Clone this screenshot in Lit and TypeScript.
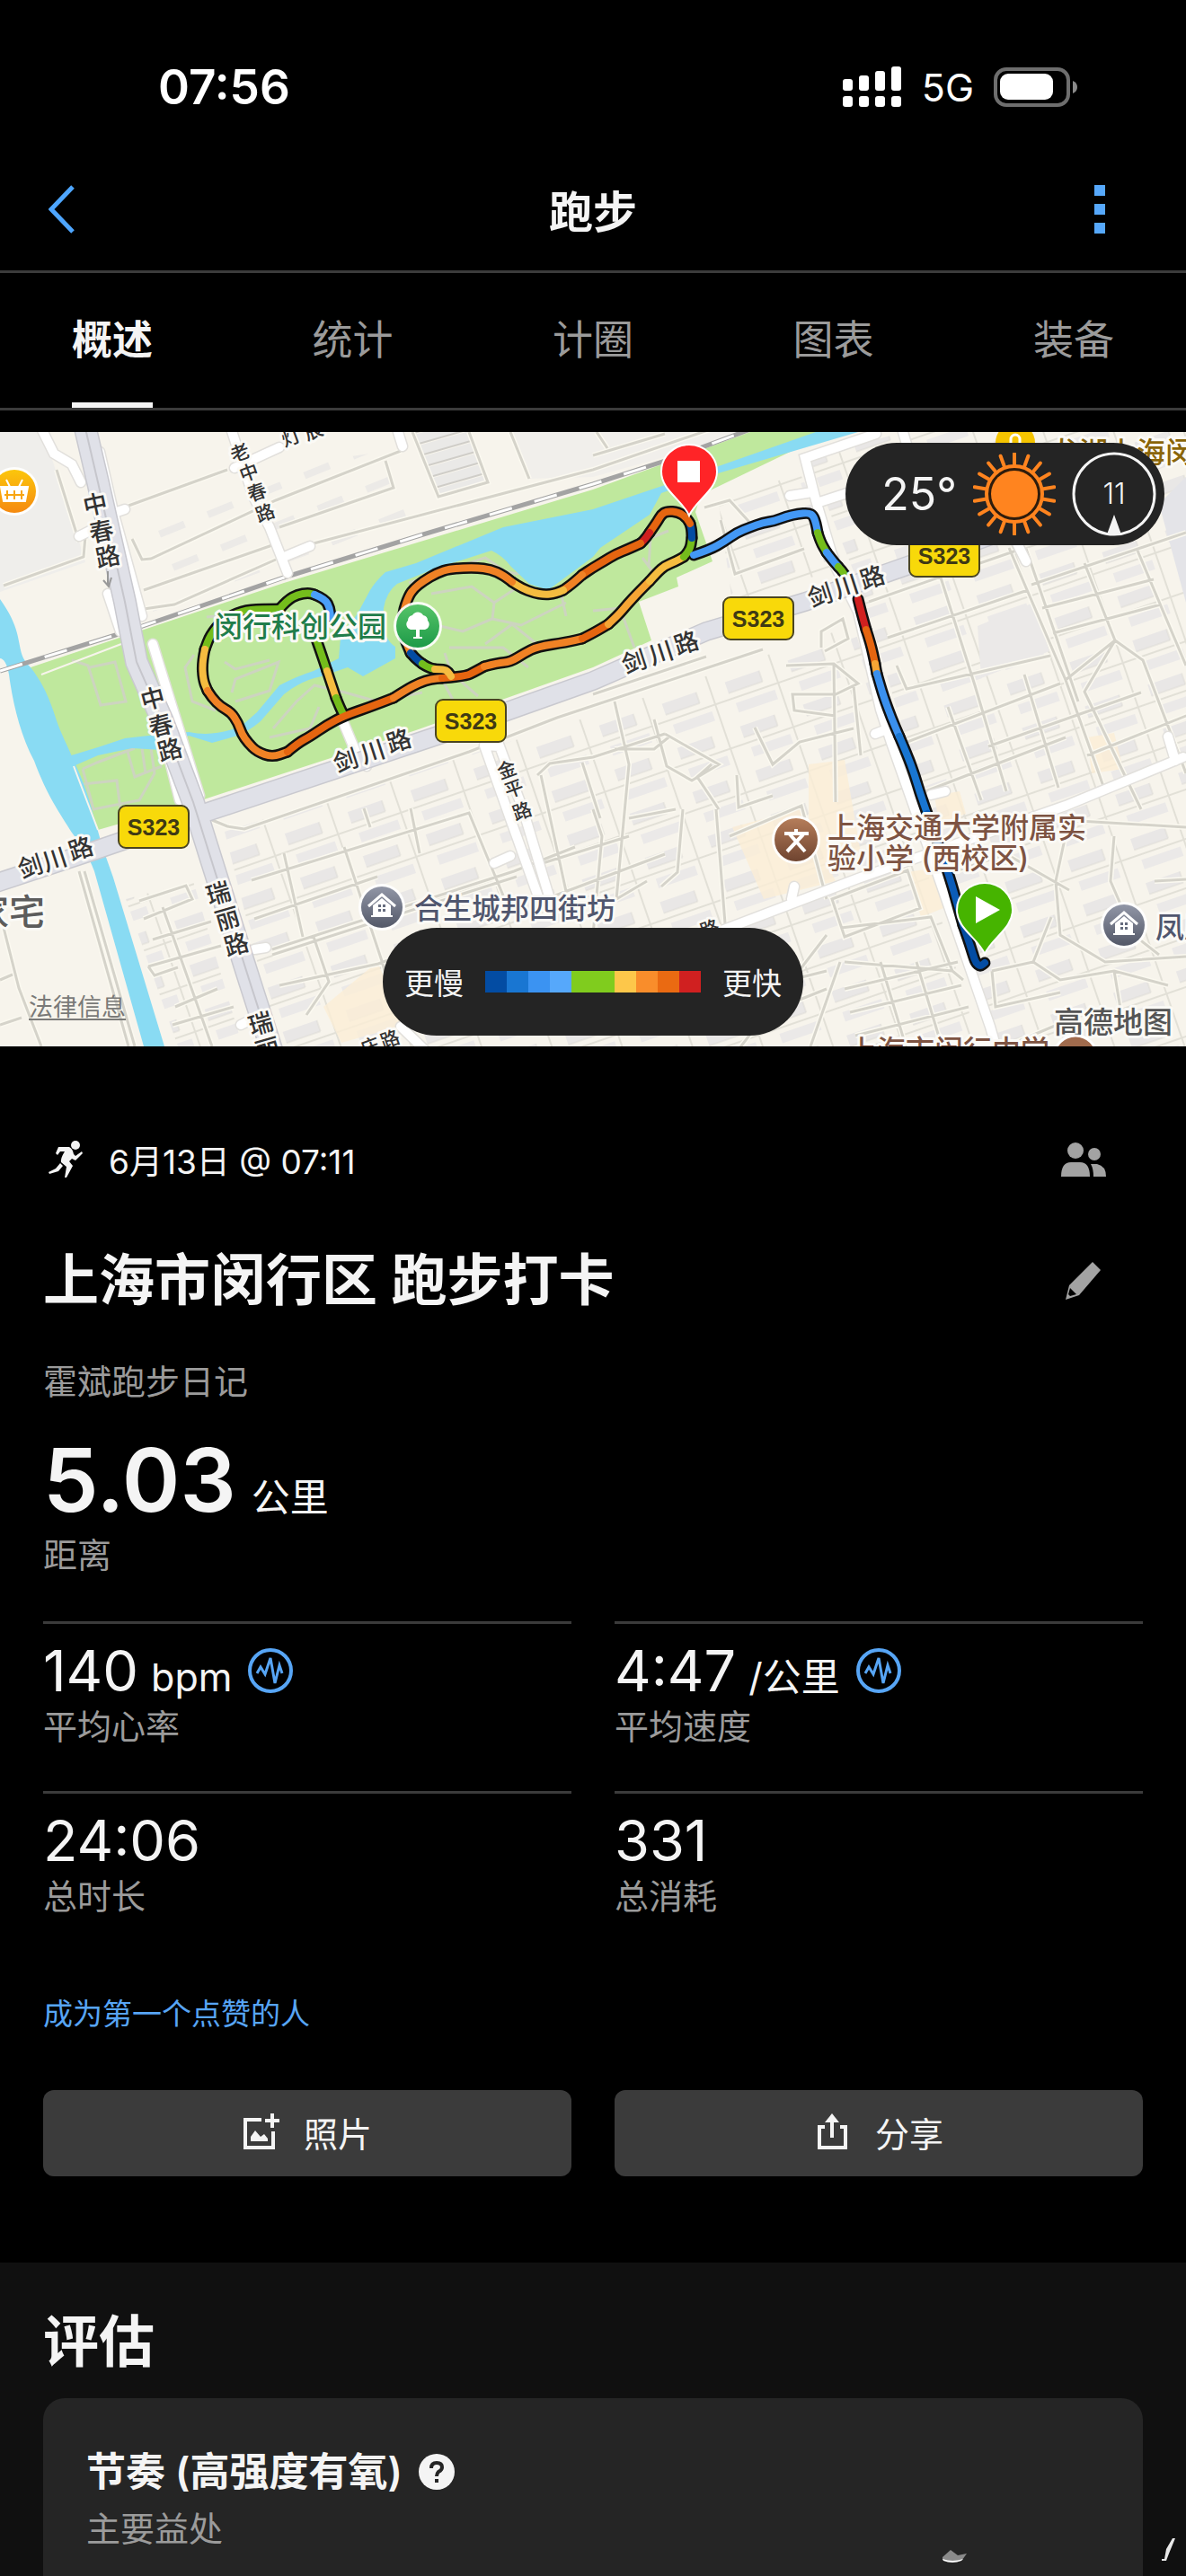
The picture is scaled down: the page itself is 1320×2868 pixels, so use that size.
import { LitElement, css, html, svg } from "lit";
import { customElement, property, state } from "lit/decorators.js";
import { classMap } from "lit/directives/class-map.js";

type Point = [number, number];

interface RouteSegment {
  color: string;
  points: Point[];
}

interface RoadLabel {
  text: string;
  angle: number;
  size: number;
  at: Point[];
}

// slow -> fast
const PACE_COLORS = [
  "#034ca3",
  "#1976d2",
  "#3b93f2",
  "#56a8fb",
  "#80cc1e",
  "#80cc1e",
  "#fdc74a",
  "#f98d2b",
  "#ea6a12",
  "#d02020",
];

const ROUTE: RouteSegment[] = [
  { color: "#74bd1c", points: [[311, 197], [320, 187], [331, 181], [343, 179], [350, 181]] },
  { color: "#4a9ff8", points: [[350, 181], [362, 186], [367, 196], [368, 206]] },
  { color: "#74bd1c", points: [[350, 225], [356, 242], [364, 266]] },
  { color: "#f5bc40", points: [[364, 266], [369, 281], [374, 296]] },
  { color: "#74bd1c", points: [[374, 296], [378, 306], [383, 316]] },
  { color: "#74bd1c", points: [[311, 197], [290, 197], [269, 199], [248, 209], [234, 226], [228, 242]] },
  { color: "#f5bc40", points: [[228, 242], [225, 256], [226, 276], [231, 288]] },
  { color: "#f08225", points: [[231, 288], [236, 296], [246, 306], [257, 312], [265, 324], [269, 336], [276, 346], [286, 356], [303, 362], [320, 356]] },
  { color: "#e56510", points: [[320, 356], [332, 346], [345, 339], [364, 326], [383, 316], [412, 306], [438, 296]] },
  { color: "#f08225", points: [[438, 296], [452, 287], [467, 279], [480, 275], [492, 274]] },
  { color: "#e56510", points: [[492, 274], [518, 272], [528, 267], [539, 261]] },
  { color: "#f08225", points: [[539, 261], [554, 257], [568, 256], [584, 246], [598, 239], [631, 234], [648, 230]] },
  { color: "#e56510", points: [[648, 230], [660, 224], [677, 214]] },
  { color: "#f5a535", points: [[677, 214], [688, 204], [698, 192], [711, 178], [723, 166]] },
  { color: "#f5bc40", points: [[723, 166], [732, 156], [740, 149], [752, 144], [761, 139]] },
  { color: "#74bd1c", points: [[761, 139], [768, 132], [770, 118]] },
  { color: "#034ca3", points: [[770, 118], [770, 110], [768, 102]] },
  { color: "#e56510", points: [[768, 102], [765, 96], [755, 89], [742, 88], [736, 92], [732, 99], [723, 112]] },
  { color: "#d02020", points: [[723, 112], [719, 118], [713, 124]] },
  { color: "#e56510", points: [[713, 124], [700, 130], [685, 136], [672, 144], [660, 151], [648, 159]] },
  { color: "#f08225", points: [[648, 159], [638, 168], [627, 176]] },
  { color: "#f5bc40", points: [[627, 176], [618, 180], [606, 181], [594, 179], [581, 174], [570, 167]] },
  { color: "#f08225", points: [[570, 167], [560, 159], [546, 153], [530, 151], [501, 152], [486, 157], [471, 166], [461, 174], [455, 182], [448, 202], [448, 225], [457, 246]] },
  { color: "#034ca3", points: [[457, 246], [462, 252], [470, 258]] },
  { color: "#74bd1c", points: [[470, 258], [476, 262], [484, 264]] },
  { color: "#f5bc40", points: [[484, 264], [494, 264], [499, 267], [502, 272]] },
  { color: "#4398f5", points: [[772, 137], [790, 131], [806, 122], [820, 112], [835, 106], [849, 101], [862, 99], [875, 94], [888, 91], [900, 90], [905, 93], [908, 101], [910, 112]] },
  { color: "#74bd1c", points: [[910, 112], [913, 122], [920, 134]] },
  { color: "#4398f5", points: [[920, 134], [926, 142], [933, 150]] },
  { color: "#74bd1c", points: [[933, 150], [937, 154], [942, 162]] },
  { color: "#d02020", points: [[955, 186], [959, 202], [964, 220]] },
  { color: "#e56510", points: [[964, 220], [969, 235], [974, 258]] },
  { color: "#f5a535", points: [[974, 258], [975, 264], [976, 269]] },
  { color: "#3a90ee", points: [[976, 269], [980, 283], [984, 296], [992, 318], [1001, 339]] },
  { color: "#1976d2", points: [[1001, 339], [1010, 360], [1018, 382], [1024, 402], [1032, 425]] },
  { color: "#0b5cb8", points: [[1032, 425], [1045, 460], [1058, 499], [1065, 524], [1072, 549]] },
  { color: "#034ca3", points: [[1072, 549], [1078, 566], [1083, 582], [1086, 591], [1091, 595], [1096, 591]] },
];

const ROAD_LABELS: RoadLabel[] = [
  { text: "中春路", angle: -12, size: 27, at: [[106, 81], [113, 111], [120, 139]] },
  { text: "中春路", angle: -15, size: 27, at: [[170, 297], [179, 327], [189, 354]] },
  { text: "瑞丽路", angle: -16, size: 27, at: [[243, 514], [253, 542], [263, 571]] },
  { text: "瑞丽", angle: -16, size: 27, at: [[290, 659], [298, 687]] },
  { text: "老中春路", angle: -20, size: 21, at: [[267, 23], [277, 45], [286, 67], [295, 90]] },
  { text: "金平路", angle: -20, size: 21, at: [[564, 376], [572, 397], [581, 422]] },
  { text: "剑川路", angle: -18, size: 27, at: [[34, 484], [61, 476], [90, 464]] },
  { text: "剑川路", angle: -18, size: 27, at: [[385, 366], [415, 356], [444, 344]] },
  { text: "剑川路", angle: -18, size: 27, at: [[706, 256], [736, 246], [764, 235]] },
  { text: "剑川路", angle: -18, size: 27, at: [[913, 182], [942, 172], [971, 162]] },
  { text: "灯辰", angle: -20, size: 21, at: [[324, 6], [349, -1]] },
  { text: "庄路", angle: -20, size: 21, at: [[412, 684], [434, 676]] },
  { text: "路", angle: -20, size: 21, at: [[790, 553]] },
];

const SHIELDS: Point[] = [
  [1011, 113],
  [804, 183],
  [484, 297],
  [131, 415],
];

const LANES = `
  M143 82L253 42 M147 119L158 142L168 141L307 76L446 21 M160 176L303 126
  M160 197L194 192L307 142 M349 124L660 42L840 -20 M311 106L438 62L429 32
  M459 0L488 72L543 56L522 0 M568 0L589 52 M4 171L93 139L95 116 M63 42L88 122
  M660 26L740 2 M664 0L676 18 M88 489L143 684 M94 489L150 684
  M0 536L21 619L46 684 M0 610L14 604 M0 660L24 652 M181 529L236 684
  M155 522L207 505L214 520L160 542 M170 565L235 545 M165 595L246 572
  M165 595L172 605L198 596 M195 640L242 620 M192 660L260 640
  M236 432L253 439L272 442L522 356L620 318L849 242 M660 292L786 250
  M280 499L522 424L560 516 M283 542L420 495 M303 576L572 489L640 462
  M303 582L575 495 M316 469L337 562 M383 462L425 589L440 640
  M457 419L467 469 M405 419L412 440 M311 616L421 592L520 556
  M349 562L366 612L341 649 M598 382L612 369L660 362L740 336
  M602 382L631 516 M604 480L700 450 M618 516L740 470 M648 368L668 430
  M684 300L700 370L686 520L720 500 M684 353L728 353L744 340
  M740 336L800 370L770 388L742 372L728 320 M792 370L776 384L800 420
  M875 260L928 258L955 280L930 292L882 292L884 310L930 316
  M914 240L914 222L938 208L944 230L918 244 M928 258L930 412 M950 282L958 360
  M840 329L860 370L890 345L950 330 M820 382L822 418L860 405
  M797 420L808 560 M812 450L892 416L920 520 M700 430L752 420
  M760 420L754 490L736 506 M660 420L670 450L660 560
  M802 98L818 158L895 130 M784 84L812 76L832 98L840 108L880 96
  M967 189L1131 132 M988 229L1144 176 M998 260L1009 286L1169 249
  M1047 162L1085 282 M1123 129L1186 276L1230 400 M1142 130L1200 300
  M1207 146L1241 232L1207 289L1270 420 M1266 132L1320 260
  M1148 170L1320 112 M1160 196L1284 164 M1172 224L1292 192
  M1186 276L1241 232L1272 254L1320 380 M1100 350L1270 290 M1085 282L1120 400
  M1010 345L1180 280 M1030 400L1186 340 M1055 306L1092 410 M1140 270L1178 396
  M1210 360L1330 312 M1150 430L1320 440 M1190 430L1175 500L1180 560L1230 590L1320 584
  M1240 450L1236 500L1262 560L1290 582 M1060 490L1120 470L1190 510
  M1104 600L1150 590L1170 540 M1150 590L1180 610L1240 600L1300 616
  M1104 600L1108 640L1180 624 M1240 600L1250 660 M1285 500L1320 498
  M1120 684L1200 650 M926 520L1010 488L1024 530L940 562Z
  M936 552L1036 540L1060 600 M820 690L920 560 M940 590L1060 600L1072 610
  M900 690L935 590 M980 590L1010 690 M940 620L1066 590 M946 646L1070 616
  M952 672L1078 640 M1020 590L1050 690 M880 610L920 600 M870 640L920 620
`;

const PARK_PATHS = `
  M80 254L98 260L112 304L140 300L128 256L100 262 M92 375L108 368L150 352
  M92 375L104 420L155 410L172 380L168 352 M92 392L130 388L134 420
  M142 356L150 384L180 372 M158 352L162 380 M230 206L250 204 M250 256L262 264L300 254
  M216 248L206 262L214 300L240 310 M258 290L262 275L310 256L300 288L262 300
  M304 330L330 300L350 282L384 290L420 300L470 290 M300 340L345 330L355 306
  M455 168L540 140L562 155L575 158L612 144L660 130 M480 180L525 172L550 190L548 208L515 222L490 216
  M550 190L580 170L625 182L630 205 M548 208L580 215L630 190 M540 236L570 214L600 238
  M500 240L560 240L588 262 M485 262L505 300 M495 246L502 268L532 294
  M660 199L690 196L706 240 M715 140L730 160 M722 150L724 118L744 110
`;

// midpoint smoothing keeps both ends in place so segments join up
const smooth = (points: Point[]) => {
  const [first, ...rest] = points;
  let d = `M${first[0]} ${first[1]}`;
  for (let i = 0; i < rest.length - 1; i++) {
    const [x, y] = rest[i];
    const [nx, ny] = rest[i + 1];
    d += `Q${x} ${y} ${(x + nx) / 2} ${(y + ny) / 2}`;
  }
  const last = rest[rest.length - 1];
  return `${d}L${last[0]} ${last[1]}`;
};

const houseIcon = (x: number, y: number) => svg`
  <g transform="translate(${x} ${y})">
    <circle r="26" fill="#fff" opacity="0.9" />
    <circle r="23" fill="url(#slate)" />
    <path d="M-15 -1L0 -14L15 -1" fill="none" stroke="#fff" stroke-width="3" />
    <path d="M-10 -2L0 -10L10 -2V9H12V11H-12V9H-10Z" fill="#fff" />
    <path d="M-4 -3H-1V0H-4ZM1 -3H4V0H1ZM-4 2H-1V5H-4ZM1 2H4V5H1Z" fill="#666c7e" />
  </g>
`;

const mapPin = (x: number, y: number, color: string) => svg`
  <path
    transform="translate(${x} ${y})"
    d="M0 0C-8 -18 -31 -28 -31 -49A31 30 0 0 1 31 -49C31 -28 8 -18 0 0Z"
    fill=${color}
    stroke="#fff"
    stroke-width="2"
  />
`;

@customElement("run-map")
export class RunMap extends LitElement {
  static styles = css`
    :host {
      display: block;
      position: relative;
      height: 684px;
      overflow: hidden;
      font-family: Inter, "Noto Sans CJK SC", sans-serif;
    }
    .canvas {
      display: block;
      width: 100%;
      height: 100%;
    }
    .halo {
      paint-order: stroke;
      stroke: #fbfaf6;
      stroke-width: 6px;
      stroke-linejoin: round;
    }
    .road {
      fill: #333;
      text-anchor: middle;
      dominant-baseline: central;
      font-weight: 500;
    }
    .place {
      font-size: 32px;
      font-weight: 500;
    }
    .park {
      fill: #1f7d4a;
    }
    .estate {
      fill: #50566e;
    }
    .school {
      fill: #7d5342;
    }
    .mall {
      fill: #8a6508;
    }
    .village {
      fill: #5c5c5c;
      font-size: 40px;
      font-weight: 500;
    }
    .brand {
      fill: #555;
      font-size: 33px;
      font-weight: 500;
    }
    .shield {
      fill: #3f3a14;
      font-family: "Liberation Sans", sans-serif;
      font-size: 25px;
      font-weight: 700;
      text-anchor: middle;
    }
    .weather {
      position: absolute;
      top: 12px;
      right: 24px;
      display: flex;
      align-items: center;
      gap: 18px;
      height: 114px;
      padding: 0 9px 0 40px;
      border-radius: 57px;
      background: #242424;
      color: #f4f4f4;
      box-sizing: border-box;
    }
    .temperature {
      font-size: 50px;
    }
    .weather svg {
      display: block;
    }
    .wind {
      font-size: 32px;
      font-weight: 300;
      text-anchor: middle;
      fill: #f4f4f4;
    }
    .legend {
      position: absolute;
      bottom: 12px;
      left: 50%;
      transform: translateX(-50%);
      display: flex;
      align-items: center;
      gap: 24px;
      height: 120px;
      padding: 0 24px;
      border-radius: 60px;
      background: #242424;
      color: #f4f4f4;
      font-size: 33px;
      white-space: nowrap;
      box-sizing: border-box;
    }
    .scale {
      display: flex;
    }
    .step {
      width: 24px;
      height: 24px;
    }
    .legal {
      position: absolute;
      bottom: 26px;
      left: 32px;
      color: #7a7a78;
      font-size: 27px;
      text-underline-offset: 3px;
    }
  `;

  renderBase() {
    return svg`
      <rect width="1320" height="684" fill="#f7f4ec" />
      <path d="M0 0H48L88 122L95 145L0 178Z" fill="#efeeeb" />
      <path d="M568 0H840L660 50L589 52Z" fill="#f1efeb" />
      <path d="M250 445L640 322L950 215L1090 684H310Z" fill="url(#blocks)" />
      <path d="M800 80L890 45L940 150L815 190Z" fill="url(#blocks)" />
      <path d="M900 30L1320 -90V684H1110L960 180Z" fill="url(#blocks)" />
      <path d="M140 520L215 500L270 684H198Z" fill="url(#blocks)" />
      <path d="M170 90L300 40L440 20L470 90L170 200Z" fill="url(#specks)" />
      <path d="M459 0H522L543 56L488 72Z" fill="url(#sheds)" />
      <path
        d="M815 440L890 420L930 500L850 520ZM900 370L940 365L960 480L900 490ZM1040 405L1068 400L1075 425L1045 435ZM1010 490L1042 485L1050 530L1025 540ZM360 640L420 590L450 660L380 680ZM1210 340L1240 335L1250 375L1215 380Z"
        fill="#fbeed6"
        opacity="0.8"
      />
      <path d="M1088 216L1150 190L1168 244L1092 274Z" fill="#ebe9e8" />
      <path d="M1290 80L1320 50V190Z" fill="#e4e4e8" />
      <path d=${LANES} fill="none" stroke="#fbf9f0" stroke-width="6" />
      <path d=${LANES} fill="none" stroke="#d5d3ca" stroke-width="3" />
    `;
  }

  renderNature() {
    return svg`
      <path
        d="M34 262L316 168L660 64L835 0H925L780 70L774 89L793 144L753 162L755 172L711 189L725 232L660 262L463 332L227 409L109 443L82 369Z"
        fill="#bfe89d"
      />
      <path d=${PARK_PATHS} fill="none" stroke="#cdd4c0" stroke-width="3" />
      <path
        d="M0 186C10 200 16 212 19 224C24 244 22 250 34 262C56 290 60 316 67 332C80 362 90 380 99 409L114 462L126 496L183 684H160L105 489C98 470 90 460 80 446C66 424 52 404 38 366C22 336 14 300 10 270C8 258 4 252 0 252Z"
        fill="#89dbf3"
      />
      <path
        d="M908 0L740 59L660 86L560 106L463 146L429 156Q418 166 412 176L398 202L379 229L377 252L349 266Q330 272 311 282L286 312L269 327Q240 340 210 334Q180 336 139 341L109 351L76 361L84 371L109 360L147 352L180 354L210 338L236 346L261 339Q276 334 290 322L316 292Q336 276 358 272L387 262L404 272L440 252V239Q424 230 427 196Q430 178 442 169L484 152L547 132Q560 138 568 149L589 169L610 176L660 139L668 129L723 92L736 68L799 46L955 0Z"
        fill="#89dbf3"
      />
      <path d="M46 270L135 236M82 372L109 443" stroke="#f7f4ec" stroke-width="2" fill="none" />
      <path d="M0 266L135 224L316 162L471 114L660 58L744 31L835 -3" fill="none" stroke="#a3a3a3" stroke-width="5" />
      <path d="M0 266L135 224L316 162L471 114L660 58L744 31L835 -3" fill="none" stroke="#fff" stroke-width="3" stroke-dasharray="26 26" />
    `;
  }

  renderRoads() {
    const white = `
      M257 -4L282 72L300 106L320 157 M316 139L345 127 M261 40L311 17 M46 -4L60 24L80 36L90 56
      M443 0L448 16 M130 89L139 86 M88 116L100 110 M111 22L126 88L158 205 M120 180L134 222
      M146 240L178 322L200 410 M170 236L222 405 M380 318L400 366L408 372
      M539 349L566 425L600 520 M539 349L556 350L582 420L612 520 M550 480L568 472 M283 576L296 574 M268 660L276 656
      M975 2L896 29L908 76L930 150L955 200L980 309L992 346L1039 479L1102 662L1110 690
      M912 78L955 64L1010 46 M879 71L904 67 M1005 0L1014 30 M1131 122L1142 144 M992 329L974 336
      M790 560L955 497L1186 416L1317 362 M1300 339L1308 366 M881 520L884 506 M1036 404L1052 400 M446 662L475 690
    `;
    return svg`
      <path d=${white} fill="none" stroke="#e2e0dc" stroke-width="13" stroke-linecap="round" />
      <path d=${white} fill="none" stroke="#fff" stroke-width="10" stroke-linecap="round" />
      <path d="M-4 502L105 466L219 427L505 332L660 277L786 222L896 189L1018 146L1123 108" fill="none" stroke="#c9c9cf" stroke-width="22" />
      <path d="M95 -4L109 56L139 189L152 256L181 322L215 412L236 479L278 612L303 690" fill="none" stroke="#c9c9cf" stroke-width="26" />
      <path d="M-4 502L105 466L219 427L505 332L660 277L786 222L896 189L1018 146L1123 108" fill="none" stroke="#e0e1e8" stroke-width="19" />
      <path d="M95 -4L109 56L139 189L152 256L181 322L215 412L236 479L278 612L303 690" fill="none" stroke="#e0e1e8" stroke-width="23" />
      <path d="M95 -4L109 56L139 189L152 256L181 322L215 412L236 479L278 612L303 690" fill="none" stroke="#c6c6cc" stroke-width="2" />
      <path d="M120 155V170M115 165L121 172L124 162" fill="none" stroke="#999" stroke-width="2" />
    `;
  }

  renderRoute() {
    return svg`
      <g fill="none" stroke-linecap="round" stroke-linejoin="round">
        ${ROUTE.map((s) => svg`<path d=${smooth(s.points)} stroke="#111" stroke-width="13" />`)}
        ${ROUTE.map((s) => svg`<path d=${smooth(s.points)} stroke=${s.color} stroke-width="8" />`)}
      </g>
    `;
  }

  renderLabels() {
    return svg`
      ${ROAD_LABELS.map((label) =>
        [...label.text].map((char, i) => {
          const [x, y] = label.at[i];
          return svg`<text
            class="road halo"
            x=${x}
            y=${y}
            font-size=${label.size}
            transform="rotate(${label.angle} ${x} ${y})"
          >${char}</text>`;
        })
      )}
      ${SHIELDS.map(
        ([x, y]) => svg`
          <rect x=${x + 1} y=${y + 1} width="78" height="47" rx="8" fill="#f8d90a" stroke="#4a4520" stroke-width="2" />
          <text class="shield" x=${x + 40} y=${y + 34}>S323</text>
        `
      )}
      <text class="village halo" x="-30" y="549">家宅</text>
      <text class="place park halo" x="238" y="228">闵行科创公园</text>
      <text class="place estate halo" x="461" y="542">合生城邦四街坊</text>
      <text class="place estate halo" x="1286" y="563">凤凰</text>
      <text class="place school halo" x="921" y="452">上海交通大学附属实</text>
      <text class="place school halo" x="921" y="486">验小学 (西校区)</text>
      <text class="place school halo" x="944" y="700">上海市闵行中学</text>
      <text class="place mall halo" x="1169" y="34">龙湖上海闵</text>
      <text class="brand halo" x="1173" y="669">高德地图</text>
    `;
  }

  renderMarkers() {
    return svg`
      <circle cx="16" cy="66" r="27" fill="#fff" opacity="0.9" />
      <circle cx="16" cy="66" r="24" fill="url(#amber)" />
      <path d="M1 61H31L28 77H4ZM7 53L11 61M25 53L21 61" fill="#fff" stroke="#fff" stroke-width="2" />
      <path d="M8 65V75M16 65V75M24 65V75M5 70H27" stroke="#f8a510" stroke-width="2" />

      <circle cx="1130" cy="12" r="22" fill="#f5c400" />
      <path d="M1125 13V8A5 5 0 0 1 1135 8V13" fill="none" stroke="#fff" stroke-width="3" />

      <circle cx="465" cy="216" r="27" fill="#fff" opacity="0.9" />
      <circle cx="465" cy="216" r="24" fill="url(#leaf)" />
      <path
        d="M463 220H457A6 6 0 0 1 454 210A6 6 0 0 1 459 204A7 7 0 0 1 471 204A6 6 0 0 1 476 210A6 6 0 0 1 473 220H467V228H470V230H460V228H463Z"
        fill="#fff"
      />

      <circle cx="886" cy="454" r="27" fill="#fff" opacity="0.9" />
      <circle cx="886" cy="454" r="24" fill="url(#cocoa)" />
      <path d="M873 447H900M886 442V447M879 448L896 467M894 448L876 467" fill="none" stroke="#fff" stroke-width="4" />
      <circle cx="1197" cy="696" r="24" fill="#a06b4d" stroke="#fff" stroke-width="3" />

      ${houseIcon(425, 529)} ${houseIcon(1251, 549)}
      ${mapPin(767, 93, "#ff2427")}
      <rect x="754" y="32" width="25" height="24" fill="#fff" />
      ${mapPin(1096, 581, "#46b400")}
      <path d="M1086 517L1113 532L1086 547Z" fill="#fff" />
    `;
  }

  render() {
    const rays = Array.from({ length: 18 }, (_, i) => i * 20);

    return html`
      <svg class="canvas" viewBox="0 0 1320 684" preserveAspectRatio="xMidYMid slice" role="img" aria-label="跑步路线">
        <defs>
          <pattern id="blocks" width="74" height="52" patternUnits="userSpaceOnUse" patternTransform="rotate(-19)">
            <rect x="6" y="6" width="40" height="13" fill="#e9e7e6" />
            <rect x="10" y="32" width="46" height="11" fill="#ebe9e8" />
            <path d="M6 19H46V6" stroke="#dddbd6" fill="none" />
            <path d="M0 26H74M62 0V52" stroke="#e2e0d7" stroke-width="2" fill="none" />
          </pattern>
          <pattern id="specks" width="58" height="40" patternUnits="userSpaceOnUse" patternTransform="rotate(-22)">
            <rect x="6" y="8" width="30" height="8" fill="#eceae7" />
          </pattern>
          <pattern id="sheds" width="60" height="13" patternUnits="userSpaceOnUse" patternTransform="rotate(-16)">
            <rect width="60" height="10" fill="#eae9e7" />
            <path d="M0 11H60" stroke="#cfcdc8" stroke-width="2" />
          </pattern>
          <linearGradient id="amber" x2="0" y2="1">
            <stop stop-color="#fcc60c" />
            <stop offset="1" stop-color="#f58a10" />
          </linearGradient>
          <linearGradient id="leaf" x2="0" y2="1">
            <stop stop-color="#56c468" />
            <stop offset="1" stop-color="#1d9a48" />
          </linearGradient>
          <linearGradient id="cocoa" x2="0" y2="1">
            <stop stop-color="#b57d5a" />
            <stop offset="1" stop-color="#6f4430" />
          </linearGradient>
          <linearGradient id="slate" x2="0" y2="1">
            <stop stop-color="#9196a6" />
            <stop offset="1" stop-color="#535868" />
          </linearGradient>
        </defs>
        ${this.renderBase()} ${this.renderNature()} ${this.renderRoads()}
        ${this.renderRoute()} ${this.renderLabels()} ${this.renderMarkers()}
      </svg>

      <div class="weather">
        <span class="temperature">25°</span>
        <svg width="92" height="92" viewBox="-46 -46 92 92" aria-hidden="true">
          <circle r="31" fill="#2e1c0c" stroke="#ff841f" stroke-width="4" />
          <circle r="26" fill="#ff841f" />
          ${rays.map(
            (angle) => svg`<path d="M0 -33V-45" stroke="#ff841f" stroke-width="4" stroke-linecap="round" transform="rotate(${angle})" />`
          )}
        </svg>
        <svg width="94" height="94" viewBox="-47 -47 94 94" aria-hidden="true">
          <circle r="45" fill="none" stroke="#f4f4f4" stroke-width="3" />
          <path d="M0 23L8 45Q0 47 -8 45Z" fill="#f4f4f4" />
          <text class="wind" y="11">11</text>
        </svg>
      </div>

      <a class="legal" href="#legal">法律信息</a>

      <div class="legend">
        <span>更慢</span>
        <div class="scale">
          ${PACE_COLORS.map((color) => html`<div class="step" style="background:${color}"></div>`)}
        </div>
        <span>更快</span>
      </div>
    `;
  }
}

@customElement("metric-tile")
export class MetricTile extends LitElement {
  @property() value = "";
  @property() unit = "";
  @property() label = "";
  @property({ type: Boolean }) chart = false;

  static styles = css`
    :host {
      display: block;
      padding-top: 16px;
      border-top: 3px solid #3b3b3b;
    }
    .reading {
      display: flex;
      align-items: center;
      height: 72px;
    }
    .text {
      display: flex;
      align-items: baseline;
      gap: 14px;
      height: 72px;
      line-height: 72px;
    }
    .value {
      font-size: 63px;
    }
    .unit {
      font-size: 43px;
    }
    .label {
      margin-top: 2px;
      color: #9b9b9b;
      font-size: 38px;
      line-height: 48px;
    }
    button {
      display: flex;
      margin-left: 18px;
      padding: 0;
      border: none;
      background: none;
    }
  `;

  render() {
    return html`
      <div class="reading">
        <div class="text">
          <span class="value">${this.value}</span>
          ${this.unit ? html`<span class="unit">${this.unit}</span>` : ""}
        </div>
        ${this.chart
          ? html`
              <button type="button" aria-label="查看图表">
                <svg width="50" height="50" viewBox="0 0 50 50" fill="none" stroke="#57a5f5">
                  <circle cx="25" cy="25" r="23" stroke-width="4" />
                  <path d="M10 28L14 21L19 29L25 11L30 39L35 19L38 28" stroke-width="3" />
                </svg>
              </button>
            `
          : ""}
      </div>
      <div class="label">${this.label}</div>
    `;
  }
}

@customElement("app-root")
export class AppRoot extends LitElement {
  @state() activeTab = "概述";

  tabs = ["概述", "统计", "计圈", "图表", "装备"];

  static styles = css`
    :host {
      display: flex;
      flex-direction: column;
      position: relative;
      min-height: 100vh;
      overflow: hidden;
      background: #000;
      color: #f4f4f4;
      font-family: Inter, "Noto Sans CJK SC", sans-serif;
    }
    button {
      padding: 0;
      border: none;
      background: none;
      color: inherit;
      font: inherit;
    }
    svg {
      display: block;
    }
    h1,
    h2,
    h3,
    p {
      margin: 0;
      font-weight: 600;
    }
    .statusBar {
      display: flex;
      justify-content: space-between;
      align-items: center;
      height: 168px;
      padding: 26px 120px 0 176px;
      box-sizing: border-box;
      color: #fff;
    }
    .clock {
      font-size: 53px;
      font-weight: 600;
    }
    .signals {
      display: flex;
      align-items: center;
      gap: 22px;
      font-size: 43px;
    }
    .navBar {
      display: grid;
      grid-template-columns: 1fr auto 1fr;
      align-items: center;
      height: 136px;
      padding: 0 54px 4px;
      border-bottom: 3px solid #3b3b3b;
      box-sizing: border-box;
    }
    .navBar h1 {
      font-size: 49px;
    }
    .more {
      justify-self: end;
      width: 84px;
      display: flex;
      justify-content: center;
    }
    .tabs {
      display: flex;
      justify-content: space-between;
      padding: 0 80px;
      margin-bottom: 24px;
      border-bottom: 3px solid #3b3b3b;
    }
    .tab {
      height: 150px;
      padding-bottom: 6px;
      border-bottom: 6px solid transparent;
      border-top: 4px solid transparent;
      color: #9b9b9b;
      font-size: 45px;
    }
    .tab.active {
      border-bottom-color: #f4f4f4;
      color: #f4f4f4;
      font-weight: 600;
    }
    .summary {
      padding: 102px 48px 96px;
    }
    .row {
      display: flex;
      justify-content: space-between;
      align-items: center;
    }
    .iconButton {
      display: flex;
      justify-content: center;
      width: 132px;
    }
    .date {
      display: flex;
      align-items: center;
      gap: 26px;
      height: 48px;
      font-size: 37px;
    }
    .title {
      margin-top: 69px;
    }
    h2 {
      font-size: 62px;
      line-height: 84px;
    }
    .muted {
      color: #9b9b9b;
      font-size: 38px;
      font-weight: 400;
      line-height: 48px;
    }
    .note {
      margin-top: 46px;
    }
    .distance {
      display: flex;
      align-items: baseline;
      gap: 17px;
      margin-top: 38px;
      height: 96px;
      line-height: 96px;
    }
    .distance strong {
      font-size: 98px;
      font-weight: 600;
    }
    .distance span {
      font-size: 43px;
    }
    .distanceLabel {
      margin-top: 11px;
    }
    .metrics {
      display: grid;
      grid-template-columns: 1fr 1fr;
      gap: 48px;
      margin-top: 50px;
    }
    .kudos {
      display: block;
      width: fit-content;
      margin-top: 83px;
      color: #57a5f5;
      font-size: 33px;
      line-height: 48px;
      text-decoration: none;
    }
    .actions {
      display: grid;
      grid-template-columns: 1fr 1fr;
      gap: 48px;
      margin-top: 61px;
    }
    .action {
      display: flex;
      justify-content: center;
      align-items: center;
      gap: 26px;
      height: 96px;
      padding-bottom: 4px;
      border-radius: 12px;
      background: #3b3b3b;
      font-size: 38px;
    }
    .evaluation {
      flex: 1;
      display: flex;
      flex-direction: column;
      padding: 47px 48px 0;
      background: #101010;
    }
    .card {
      flex: 1;
      margin-top: 20px;
      padding: 52px 48px 29px;
      border-radius: 24px 24px 0 0;
      background: #252525;
    }
    .benefit {
      display: flex;
      align-items: center;
      gap: 18px;
      height: 60px;
      margin-bottom: 9px;
    }
    .benefit h3 {
      font-size: 44px;
      line-height: 60px;
    }
    .watermark {
      position: absolute;
      right: 8px;
      bottom: 12px;
    }
  `;

  renderStatusBar() {
    const bars = [14, 10, 5, 0];

    return html`
      <div class="statusBar">
        <span class="clock">07:56</span>
        <div class="signals">
          <svg width="66" height="46" viewBox="0 0 66 46" fill="#fff" aria-hidden="true">
            ${bars.map(
              (top, i) => svg`
                <rect x=${i * 18} y=${top} width="11" height=${27 - top} rx="3" />
                <rect x=${i * 18} y="33" width="11" height="12" rx="3" />
              `
            )}
          </svg>
          <span>5G</span>
          <svg width="94" height="44" viewBox="0 0 94 44" aria-hidden="true">
            <rect x="2" y="2" width="81" height="40" rx="12" fill="none" stroke="#6e6e6e" stroke-width="4" />
            <rect x="7" y="7" width="59" height="29" rx="9" fill="#fff" />
            <path d="M88 15Q93 17 93 22Q93 27 88 29Z" fill="#8a8a8a" />
          </svg>
        </div>
      </div>
    `;
  }

  render() {
    return html`
      ${this.renderStatusBar()}

      <header class="navBar">
        <button type="button" aria-label="返回">
          <svg width="32" height="56" viewBox="0 0 32 56" fill="none" stroke="#4ea6ff" stroke-width="5">
            <path d="M27 3L3 28L27 53" />
          </svg>
        </button>
        <h1>跑步</h1>
        <button type="button" class="more" aria-label="更多">
          <svg width="12" height="54" viewBox="0 0 12 54" fill="#56a8fb">
            <path d="M0 0H12V12H0ZM0 21H12V33H0ZM0 42H12V54H0Z" />
          </svg>
        </button>
      </header>

      <nav class="tabs">
        ${this.tabs.map(
          (tab) => html`
            <button
              type="button"
              class=${classMap({ tab: true, active: tab === this.activeTab })}
              @click=${() => (this.activeTab = tab)}
            >
              ${tab}
            </button>
          `
        )}
      </nav>

      <run-map></run-map>

      <section class="summary">
        <div class="row">
          <div class="date">
            <svg width="47" height="42" viewBox="0 0 47 42" fill="#f4f4f4" aria-hidden="true">
              <circle cx="36" cy="5" r="5" />
              <path d="M17 7L29 7Q33 9 34 15L36 17L43 12L44 14L36 22L32 20L29 23L33 28L26 41L24 41L26 29L20 24Q19 20 24 12L19 12L16 16L14 14Z" />
              <path d="M19 25L22 28L17 34L7 37L6 35L14 31Z" />
            </svg>
            <span>6月13日 @ 07:11</span>
          </div>
          <button type="button" class="iconButton" aria-label="好友">
            <svg width="52" height="40" viewBox="0 0 52 40" fill="#a3a3a3">
              <circle cx="17" cy="10" r="9" />
              <circle cx="38" cy="14" r="7" />
              <path d="M1 39Q1 23 12 23H22Q33 23 33 39ZM34 25H41Q51 27 51 39H37Q37 30 34 25Z" />
            </svg>
          </button>
        </div>

        <div class="row title">
          <h2>上海市闵行区 跑步打卡</h2>
          <button type="button" class="iconButton" aria-label="编辑">
            <svg width="42" height="44" viewBox="0 0 42 44">
              <path d="M31 1L40 10L16 38L1 43L5 27Z" fill="#a3a3a3" />
              <path d="M6 30L13 37L6 39L4 37Z" fill="#000" />
            </svg>
          </button>
        </div>

        <p class="muted note">霍斌跑步日记</p>

        <div class="distance"><strong>5.03</strong><span>公里</span></div>
        <p class="muted distanceLabel">距离</p>

        <div class="metrics">
          <metric-tile value="140" unit="bpm" label="平均心率" chart></metric-tile>
          <metric-tile value="4:47" unit="/公里" label="平均速度" chart></metric-tile>
          <metric-tile value="24:06" label="总时长"></metric-tile>
          <metric-tile value="331" label="总消耗"></metric-tile>
        </div>

        <a class="kudos" href="#kudos">成为第一个点赞的人</a>

        <div class="actions">
          <button type="button" class="action">
            <svg width="42" height="42" viewBox="0 0 42 42" fill="none" stroke="#f4f4f4" stroke-width="4">
              <path d="M21 8H3V39H34V21" />
              <path d="M33 1V17M25 9H41" />
              <path d="M9 32V27L14 20L20 27L24 24L28 29V32Z" fill="#f4f4f4" stroke="none" />
            </svg>
            照片
          </button>
          <button type="button" class="action">
            <svg width="42" height="42" viewBox="0 0 42 42" fill="none" stroke="#f4f4f4" stroke-width="4">
              <path d="M12 16H6V39H35V16H29" />
              <path d="M20 28V5" />
              <path d="M20 1L28 11H12Z" fill="#f4f4f4" stroke="none" />
            </svg>
            分享
          </button>
        </div>
      </section>

      <section class="evaluation">
        <h2>评估</h2>
        <div class="card">
          <div class="benefit">
            <h3>节奏 (高强度有氧)</h3>
            <button type="button" aria-label="帮助">
              <svg width="40" height="40" viewBox="0 0 40 40" aria-hidden="true">
                <circle cx="20" cy="20" r="20" fill="#f4f4f4" />
                <path d="M14 16Q14 10 20 10Q26 10 26 15Q26 18 22 20Q20 22 20 25" fill="none" stroke="#252525" stroke-width="4" />
                <rect x="18" y="28" width="4" height="4" fill="#252525" />
              </svg>
            </button>
          </div>
          <p class="muted">主要益处</p>
        </div>
      </section>

      <svg class="watermark" width="264" height="32" viewBox="0 0 264 32" aria-hidden="true">
        <path d="M1 23L10 15L18 21L28 19L23 26Q12 30 1 26Z" fill="#8a8a8a" />
        <path d="M1 25Q12 29 24 25L22 27Q12 31 2 27Z" fill="#fff" />
        <path d="M257 2H260L253 19L250 27H245V25H248L250 14Z" fill="#e8e8e8" />
      </svg>
    `;
  }
}
